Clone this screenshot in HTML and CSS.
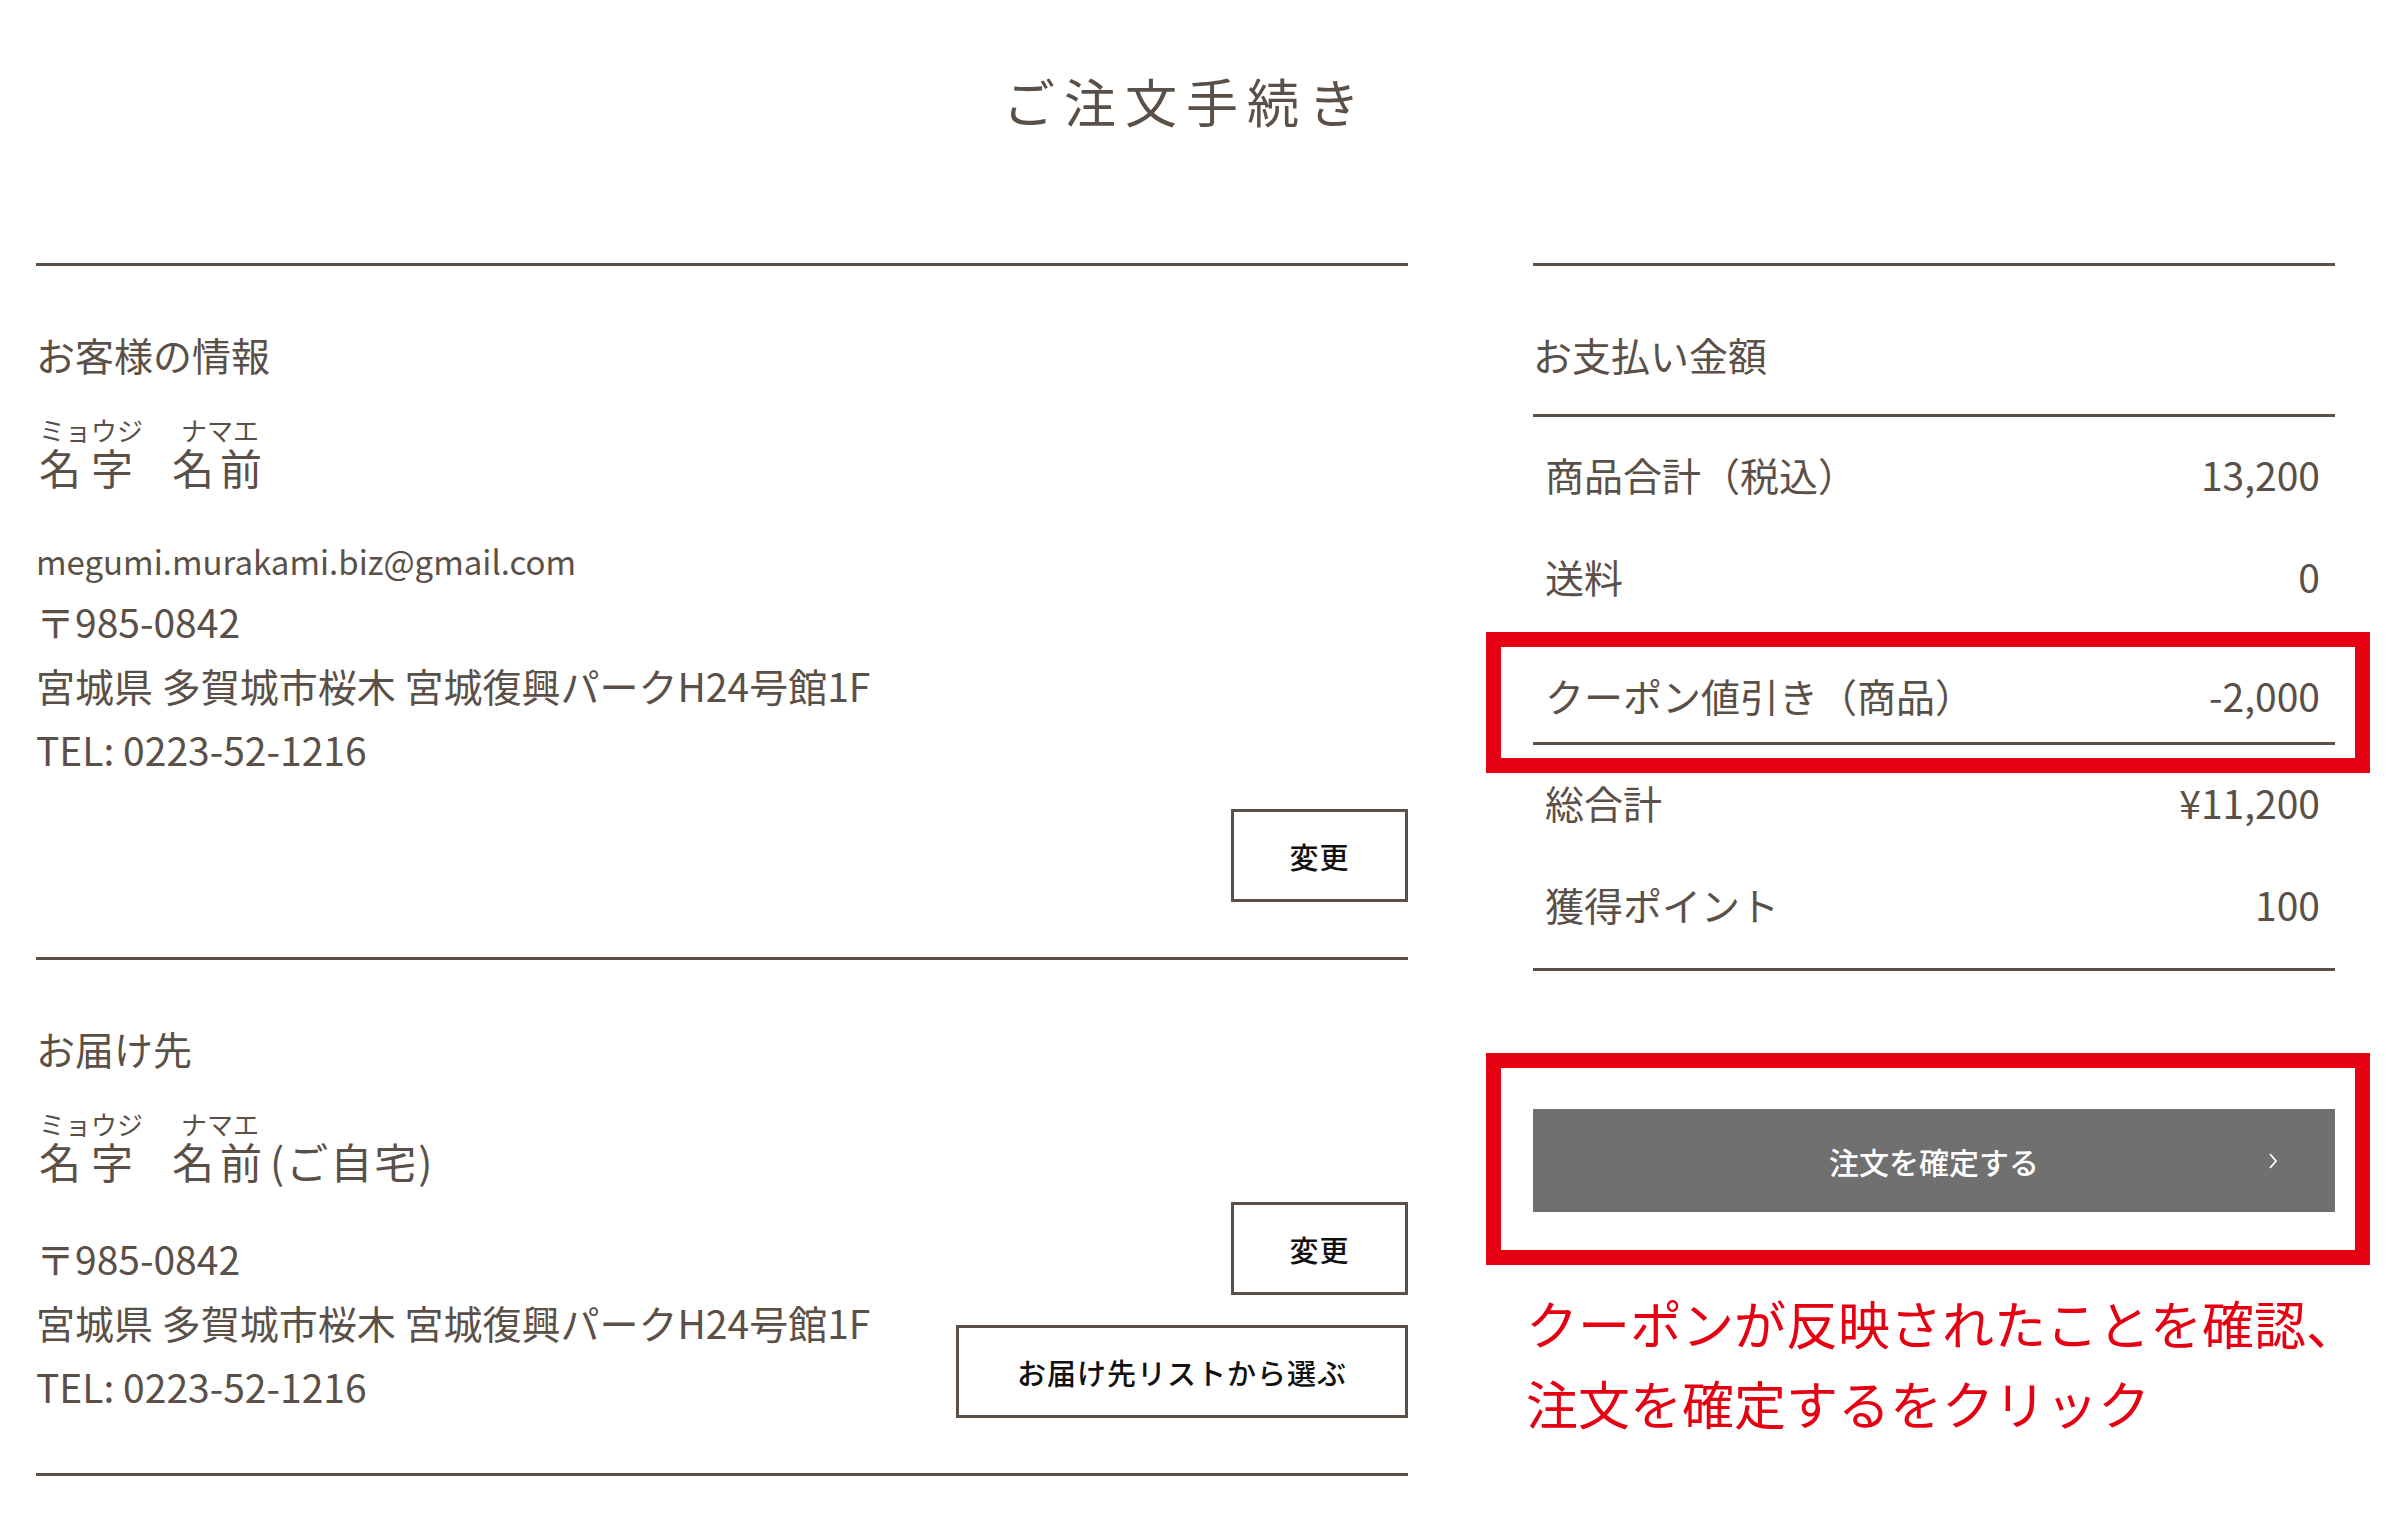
FILE: index.html
```html
<!DOCTYPE html>
<html lang="ja">
<head>
<meta charset="utf-8">
<title>ご注文手続き</title>
<link rel="stylesheet" href="styles.css">
</head>
<body>
<div class="page">
  <h1 class="page-title">ご注文手続き</h1>
  <div class="columns">
    <div class="main">
      <section class="block">
        <h2 class="block-title">お客様の情報</h2>
        <p class="name">
          <ruby class="furi furi-wide">名字<rt>ミョウジ</rt></ruby>
          <ruby class="furi furi-second">名前<rt>ナマエ</rt></ruby>
        </p>
        <ul class="contact">
          <li class="email">megumi.murakami.biz@gmail.com</li>
          <li>〒985-0842</li>
          <li>宮城県 多賀城市桜木 宮城復興パークH24号館1F</li>
          <li>TEL: 0223-52-1216</li>
        </ul>
        <div class="actions">
          <button class="btn btn-small" type="button">変更</button>
        </div>
      </section>
      <section class="block block-last">
        <h2 class="block-title">お届け先</h2>
        <p class="name">
          <ruby class="furi furi-wide">名字<rt>ミョウジ</rt></ruby>
          <ruby class="furi furi-second">名前<rt>ナマエ</rt></ruby>
          <span class="name-note">(ご自宅)</span>
        </p>
        <div class="delivery-row">
          <ul class="contact">
            <li>〒985-0842</li>
            <li>宮城県 多賀城市桜木 宮城復興パークH24号館1F</li>
            <li>TEL: 0223-52-1216</li>
          </ul>
          <div class="btn-stack">
            <button class="btn btn-small" type="button">変更</button>
            <button class="btn btn-wide" type="button">お届け先リストから選ぶ</button>
          </div>
        </div>
      </section>
    </div>
    <aside class="summary">
      <h2 class="block-title summary-title">お支払い金額</h2>
      <dl class="rows rows-first">
        <div class="row"><dt>商品合計（税込）</dt><dd>13,200</dd></div>
        <div class="row"><dt>送料</dt><dd>0</dd></div>
        <div class="row row-coupon">
          <dt>クーポン値引き（商品）</dt><dd>-2,000</dd>
          <span class="highlight highlight-coupon"></span>
        </div>
      </dl>
      <dl class="rows rows-total">
        <div class="row"><dt>総合計</dt><dd>¥11,200</dd></div>
        <div class="row"><dt>獲得ポイント</dt><dd>100</dd></div>
      </dl>
      <div class="confirm-wrap">
        <button class="confirm" type="button">
          <span class="confirm-label">注文を確定する</span>
          <svg class="confirm-arrow" width="12" height="18" viewBox="0 0 12 18" aria-hidden="true"><polyline points="3,2 9,9 3,16" fill="none" stroke="#ffffff" stroke-width="1.8"/></svg>
        </button>
        <span class="highlight highlight-confirm"></span>
      </div>
      <p class="note">クーポンが反映されたことを確認、<br>注文を確定するをクリック</p>
    </aside>
  </div>
</div>
</body>
</html>
```
FILE: styles.css
```css
* { box-sizing: border-box; }
html, body { margin: 0; padding: 0; background: #ffffff; }
body {
  font-family: "Noto Sans CJK JP", "Noto Sans", sans-serif;
  color: #5b5048;
}
.page { width: 2388px; padding: 75px 0 0 36px; }
.page-title {
  margin: 0 0 136px 0;
  width: 2300px;
  text-align: center;
  font-size: 52px;
  line-height: 52px;
  font-weight: 400;
  letter-spacing: 9px;
  color: #5b5048;
}
.columns { display: flex; gap: 125px; align-items: flex-start; }
.main { width: 1372px; }
.block { border-top: 3px solid #5b5048; padding: 60px 0 55px; }
.block-last { border-bottom: 3px solid #5b5048; }
.block-title {
  margin: 0;
  font-size: 39px;
  line-height: 56px;
  font-weight: 400;
}

/* name with furigana */
.name {
  display: flex;
  align-items: flex-end;
  margin: 35px 0 0 0;
  font-size: 42px;
  line-height: 50px;
}
.furi {
  display: inline-flex;
  flex-direction: column-reverse;
  align-items: center;
  letter-spacing: 6px;
}
.furi-wide { letter-spacing: 10px; padding-left: 3px; }
.furi-second { margin-left: 29px; }
.furi rt {
  display: block;
  font-size: 26px;
  line-height: 25px;
  letter-spacing: 0;
}
.name-note { margin-left: 2px; letter-spacing: 2px; }

.contact {
  list-style: none;
  margin: 41px 0 0 0;
  padding: 0;
  font-size: 39px;
  line-height: 64px;
}
.contact .email { font-size: 33px; line-height: 56px; }
.actions { display: flex; justify-content: flex-end; margin-top: 28px; }
.btn {
  height: 93px;
  border: 3px solid #5b5048;
  background: #ffffff;
  color: #111111;
  font-family: inherit;
  font-size: 29px;
  font-weight: 500;
  letter-spacing: 1px;
  padding: 0;
}
.btn-small { width: 177px; }
.btn-wide { width: 452px; }
.delivery-row { display: flex; justify-content: space-between; align-items: flex-end; margin-top: 16px; }
.delivery-row .contact { margin-top: 0; }
.btn-stack { display: flex; flex-direction: column; align-items: flex-end; gap: 30px; }

/* payment summary */
.summary { width: 802px; border-top: 3px solid #5b5048; padding-top: 60px; }
.summary-title { padding-bottom: 32px; border-bottom: 3px solid #5b5048; }
.rows { margin: 0; padding: 9px 0 0; }
.rows-total { border-bottom: 3px solid #5b5048; padding-bottom: 10px; }
.row {
  display: flex;
  justify-content: space-between;
  align-items: center;
  height: 102px;
  padding: 0 15px 6px 12px;
  font-size: 39px;
  line-height: 42px;
}
.row dt, .row dd { margin: 0; }
.row-coupon {
  position: relative;
  height: 115px;
  align-items: flex-end;
  padding-bottom: 26px;
  border-bottom: 3px solid #5b5048;
}
.highlight {
  position: absolute;
  border: 15px solid #e50012;
  pointer-events: none;
}
.highlight-coupon { top: 2px; bottom: -31px; left: -47px; right: -35px; }
.confirm-wrap { position: relative; margin-top: 138px; }
.confirm {
  position: relative;
  display: flex;
  align-items: center;
  justify-content: center;
  width: 802px;
  height: 103px;
  border: 0;
  background: #707070;
  color: #ffffff;
  font-family: inherit;
  font-size: 30px;
  font-weight: 500;
  padding: 0;
}
.confirm-arrow { position: absolute; right: 56px; top: 43px; }
.highlight-confirm { top: -56px; bottom: -53px; left: -47px; right: -35px; }
.note {
  margin: 71px 0 0 -7px;
  font-size: 52px;
  line-height: 80px;
  color: #e50012;
  white-space: nowrap;
}
```
